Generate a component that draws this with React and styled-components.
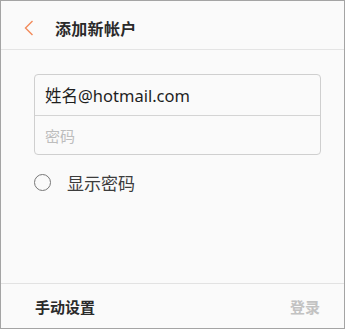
import styled, { createGlobalStyle } from "styled-components";

const GlobalStyle = createGlobalStyle`
  html, body {
    margin: 0;
    padding: 0;
    background: #fafafa;
  }
  * {
    box-sizing: border-box;
  }
`;

const Frame = styled.div`
  width: 345px;
  height: 329px;
  border: 1px solid #a4a4a4;
  background: #fafafa;
  display: flex;
  flex-direction: column;
  font-family: "Noto Sans", "Noto Sans CJK SC", sans-serif;
`;

const Header = styled.header`
  height: 49px;
  flex: none;
  display: flex;
  align-items: center;
  gap: 19px;
  padding: 6px 0 0 21px;
  border-bottom: 1px solid #e4e4e4;
`;

const BackButton = styled.button`
  width: 14px;
  height: 18px;
  padding: 0;
  border: 0;
  background: none;
  display: flex;
  align-items: center;
  justify-content: center;
`;

const Title = styled.h1`
  margin: 0;
  font-size: 16px;
  font-weight: 700;
  color: #2a2a2a;
  letter-spacing: 0.3px;
`;

const Main = styled.main`
  flex: 1;
  display: flex;
  flex-direction: column;
  padding: 24px 23px 0 33px;
`;

const Fields = styled.div`
  border: 1px solid #cfcfcf;
  border-radius: 4px;
  background: #fafafa;
  display: flex;
  flex-direction: column;
`;

const Field = styled.div`
  height: ${({ $first }) => ($first ? "40px" : "39px")};
  display: flex;
  align-items: center;
  padding: 0 10px;
  font-size: ${({ $placeholder }) => ($placeholder ? "15px" : "16.5px")};
  color: ${({ $placeholder }) => ($placeholder ? "#bdbdbd" : "#1e1e1e")};
  border-top: ${({ $first }) => ($first ? "none" : "1px solid #d4d4d4")};
`;

const CheckRow = styled.label`
  margin-top: 15px;
  display: flex;
  align-items: center;
  gap: 16px;
  font-size: 17px;
  color: #3c3c3c;
`;

const Radio = styled.span`
  width: 17px;
  height: 17px;
  border: 1.5px solid #777;
  border-radius: 50%;
  flex: none;
`;

const Footer = styled.footer`
  height: 45px;
  flex: none;
  border-top: 1px solid #e2e2e2;
  display: flex;
  align-items: center;
  justify-content: space-between;
  padding: 0 24px 0 34px;
`;

const FooterAction = styled.span`
  font-size: 15px;
  font-weight: 700;
  color: ${({ $disabled }) => ($disabled ? "#c2c2c2" : "#2a2a2a")};
`;

export default function App() {
  return (
    <>
      <GlobalStyle />
      <Frame>
        <Header>
          <BackButton aria-label="返回">
            <svg width="10" height="16" viewBox="0 0 10 16">
              <path
                d="M8.5 1 L1.5 8 L8.5 15"
                fill="none"
                stroke="#f28a5a"
                strokeWidth="1.4"
              />
            </svg>
          </BackButton>
          <Title>添加新帐户</Title>
        </Header>
        <Main>
          <Fields>
            <Field $first>姓名@hotmail.com</Field>
            <Field $placeholder>密码</Field>
          </Fields>
          <CheckRow>
            <Radio />
            显示密码
          </CheckRow>
        </Main>
        <Footer>
          <FooterAction>手动设置</FooterAction>
          <FooterAction $disabled>登录</FooterAction>
        </Footer>
      </Frame>
    </>
  );
}
